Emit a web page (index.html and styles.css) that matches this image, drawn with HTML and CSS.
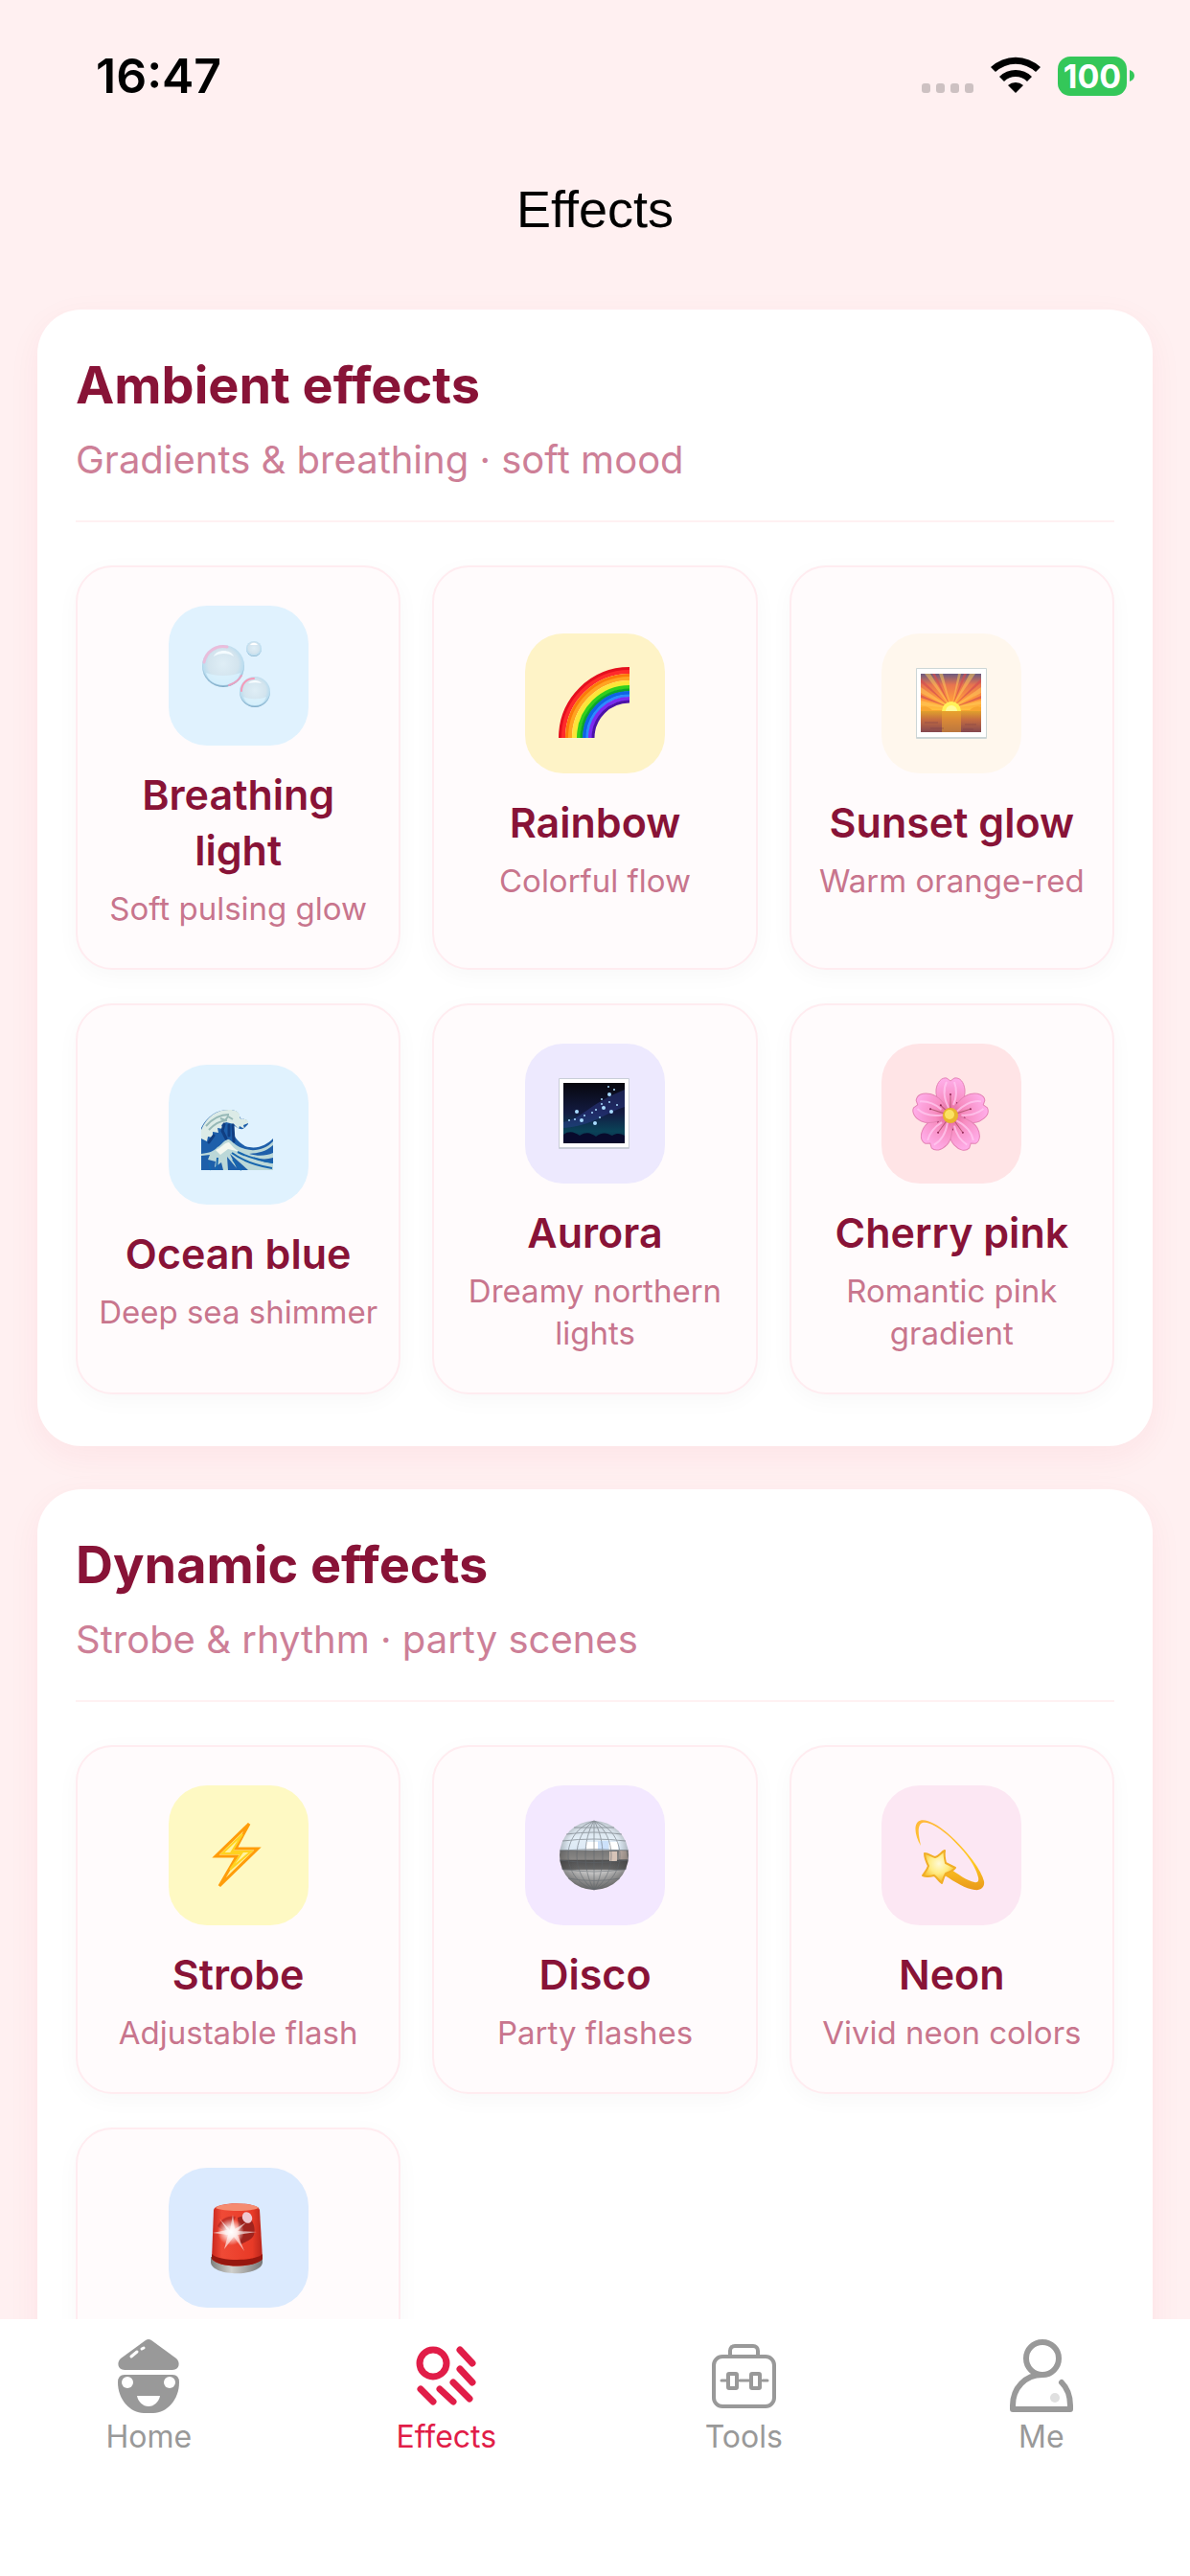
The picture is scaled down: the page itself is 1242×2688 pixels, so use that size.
FILE: index.html
```html
<!doctype html>
<html lang="en">
  <head>
    <meta charset="UTF-8" />
    <meta name="viewport" content="width=device-width, initial-scale=1.0" />
    <title>Effects</title>
    <link rel="stylesheet" href="styles.css">
  </head>

  <body>
    <div class="status-bar">
      <span class="time">16:47</span>
      <div class="status-icons">
        <svg class="signal" width="54" height="42" viewBox="0 0 54 42" fill="#cdc1c2">
          <rect x="0" y="29" width="9" height="10" rx="3" />
          <rect x="15" y="29" width="9" height="10" rx="3" />
          <rect x="30" y="29" width="9" height="10" rx="3" />
          <rect x="45" y="29" width="9" height="10" rx="3" />
        </svg>
        <svg class="wifi" width="52" height="42" viewBox="0 0 52 42">
          <path d="M0 12a38 38 0 0 1 52 0l-5 5a31 31 0 0 0-42 0z" />
          <path d="M9 22a24 24 0 0 1 34 0l-5 5a17 17 0 0 0-24 0z" />
          <path d="M18 31a12 12 0 0 1 16 0l-8 8z" />
        </svg>
        <div class="battery">
          <span class="battery-level">100</span>
          <svg width="5" height="12" viewBox="0 0 5 12"><path fill="#34c759" d="M0 0c3 1 5 3 5 6s-2 5-5 6z" /></svg>
        </div>
      </div>
    </div>

    <header class="page-header">
      <h1>Effects</h1>
    </header>

    <main class="content">
      <section class="panel">
        <div class="panel-head">
          <h2>Ambient effects</h2>
          <p>Gradients &amp; breathing · soft mood</p>
        </div>
        <div class="grid">
          <button class="card" type="button">
            <span class="icon sky">
              <svg viewBox="0 0 74 74">
                <defs>
                  <radialGradient id="bubble" cx="50%" cy="45%" r="55%">
                    <stop offset="0" stop-color="#dfeef6" />
                    <stop offset=".65" stop-color="#d3e4ee" />
                    <stop offset=".88" stop-color="#b9dcef" />
                    <stop offset="1" stop-color="#6f9fbe" />
                  </radialGradient>
                </defs>
                <circle cx="21" cy="27" r="22" fill="url(#bubble)" />
                <path d="M1 23A20 20 0 0 1 25 7" fill="none" stroke="#f3b4d6" stroke-width="3" stroke-linecap="round" opacity=".8" />
                <path d="M11 17c3-8 18-8 21 0-5-4-15-4-21 0z" fill="#f4fbff" />
                <path d="M3 34c10 4 26 4 36 0-2 8-9 13-18 13S5 42 3 34z" fill="#d9f2ff" opacity=".8" />
                <path d="M27 47c6-2 10-5 13-10" fill="none" stroke="#e8a3c2" stroke-width="2" stroke-linecap="round" />
                <circle cx="54" cy="54" r="16" fill="url(#bubble)" />
                <path d="M40 53c0-8 6-13 13-13" fill="none" stroke="#f59ab8" stroke-width="2" stroke-linecap="round" />
                <path d="M47 45c3-4 11-4 14 0-4-1-9-1-14 0z" fill="#f7fcff" />
                <path d="M42 59c7 3 17 3 24 0-2 6-6 9-12 9s-10-3-12-9z" fill="#daf2fe" opacity=".8" />
                <circle cx="53" cy="9" r="8" fill="url(#bubble)" />
                <path d="M49 5c2-3 6-3 8 0z" fill="#fff" />
              </svg>
            </span>
            <span class="name">Breathing light</span>
            <span class="desc">Soft pulsing glow</span>
          </button>
          <button class="card" type="button">
            <span class="icon amber">
              <svg viewBox="0 0 74 74" fill="none" stroke-width="4">
                <path d="M1 73A72 72 0 0 1 73 1" stroke="#e5101f" />
                <path d="M4 73A69 69 0 0 1 73 4" stroke="#ff2b2b" />
                <path d="M8 73A65 65 0 0 1 73 8" stroke="#fb7a09" />
                <path d="M11 73A62 62 0 0 1 73 11" stroke="#ffa321" />
                <path d="M15 73A58 58 0 0 1 73 15" stroke="#ffe23c" />
                <path d="M17 73A56 56 0 0 1 73 17" stroke="#f7e935" stroke-width="3" />
                <path d="M20 73A53 53 0 0 1 73 20" stroke="#31cf1c" />
                <path d="M23 73A50 50 0 0 1 73 23" stroke="#0ca628" stroke-width="3" />
                <path d="M26 73A47 47 0 0 1 73 26" stroke="#0f63e4" />
                <path d="M29 73A44 44 0 0 1 73 29" stroke="#2a8bff" stroke-width="3" />
                <path d="M32 73A41 41 0 0 1 73 32" stroke="#7b2bf0" />
                <path d="M35 73A38 38 0 0 1 73 35" stroke="#4b11a8" stroke-width="3" />
              </svg>
            </span>
            <span class="name">Rainbow</span>
            <span class="desc">Colorful flow</span>
          </button>
          <button class="card" type="button">
            <span class="icon orange">
              <svg viewBox="0 0 74 74">
                <defs>
                  <linearGradient id="dusk" x2="0" y2="1">
                    <stop offset="0" stop-color="#6b5a80" />
                    <stop offset=".3" stop-color="#e8744f" />
                    <stop offset=".7" stop-color="#ff9a3c" />
                    <stop offset="1" stop-color="#ffc53d" />
                  </linearGradient>
                  <linearGradient id="sea" x2="0" y2="1">
                    <stop offset="0" stop-color="#e0a02c" />
                    <stop offset=".4" stop-color="#c66d40" />
                    <stop offset="1" stop-color="#85484f" />
                  </linearGradient>
                </defs>
                <rect width="74" height="74" rx="1" fill="#cdd6d6" />
                <rect x="1" y="1" width="72" height="71" fill="#fff" />
                <rect x="5" y="6" width="63" height="39" fill="url(#dusk)" />
                <path d="M37 42 5 34v5zM37 42 5 20v6zM37 42 9 6h6zM37 42 24 6h4zM37 42 44 6h3zM37 42 56 6h6zM37 42 68 20v6zM37 42 68 34v4z" fill="#ffcf5a" opacity=".5" />
                <path d="M37 42 5 28v3zM37 42 5 11v4zM37 42 17 6h3zM37 42 50 6h3zM37 42 68 11v4zM37 42 68 29v3z" fill="#d64f50" opacity=".7" />
                <path d="M5 41c5-2 8 0 12 3h39c4-3 8-5 12-3v5H5z" fill="#f7a531" />
                <rect x="5" y="45" width="63" height="22" fill="url(#sea)" />
                <path d="M27 45h20v22H27z" fill="#f0a62e" opacity=".5" />
                <path d="M27 45a10 10 0 0 1 20 0z" fill="#fff159" />
                <path d="M31 45a6 6 0 0 1 12 0z" fill="#fffa9a" />
                <path d="M9 57h14m28 2h12m-48 4h14m20 1h11" stroke="#7c4148" opacity=".5" />
              </svg>
            </span>
            <span class="name">Sunset glow</span>
            <span class="desc">Warm orange-red</span>
          </button>
          <button class="card" type="button">
            <span class="icon sky">
              <svg viewBox="0 0 74 74">
                <path d="M-2 30c6-12 16-19 29-19 7 0 10 2 11 7l2 3c5-1 7 2 7 5l-5 5c-5 1-8-3-11-4-2 8 3 16 13 22 12 4 22-1 29-8v33H-2z" fill="#1e5faa" />
                <path d="M-2 32c6-14 16-21 29-21 8 0 12 3 11 8l2 2c5-1 8 2 7 4l-5 2 1 4-5-3-1 3-5-5-8-2-5 3 2 4-6-1 1 5-6-1v6l-5-1-1 5-6-3z" fill="#dcebe7" />
                <path d="M3 28c7-8 14-12 24-12M6 32c6-6 10-9 19-10M18 20l5 2 3-4 5 3" fill="none" stroke="#96b8b6" stroke-width="2" />
                <path d="M-2 57c9-1 13-3 17-7 4-2 8-9 12-8 5 3 8 8 17 10 10 3 22 0 29-8v4c-8 7-15 8-25 9 10 3 18 2 25-1v5c-7 2-13 2-21-1 9 6 15 6 21 7v7H47L28 57l7 15-10-12 1 14h-5l-2-8-7 5 1-6-8-2 2-5-9 1z" fill="#bcd8d8" />
                <path d="M13 53c5-1 9-8 14-8 3 3 6 8 12 10l-13-3-8 6z" fill="#f3f7ef" />
                <path d="M30 56c11 8 24 13 42 16M36 55c12 6 23 9 37 11M15 61l-1 13M6 66l2 8M31 63l9 11" stroke="#1766ae" stroke-width="2" fill="none" />
                <path d="M27 27v11m-5-12-2 7 4 8m-13-3-5 7m25-18 1 17" stroke="#103e82" stroke-width="3" fill="none" stroke-linecap="round" />
              </svg>
            </span>
            <span class="name">Ocean blue</span>
            <span class="desc">Deep sea shimmer</span>
          </button>
          <button class="card" type="button">
            <span class="icon violet">
              <svg viewBox="0 0 74 74">
                <defs>
                  <linearGradient id="night" x2="0" y2="1">
                    <stop offset="0" stop-color="#07070d" />
                    <stop offset=".5" stop-color="#131b42" />
                    <stop offset=".8" stop-color="#0a4358" />
                    <stop offset="1" stop-color="#0b2a48" />
                  </linearGradient>
                </defs>
                <rect x="-1" width="74" height="74" rx="1" fill="#c9ced8" />
                <rect y="1" width="72" height="71" fill="#fff" />
                <rect x="4" y="5" width="64" height="63" fill="url(#night)" />
                <path d="M4 46c20-4 28-20 64-34v18C49 36 34 50 4 52z" fill="#3444a0" opacity=".4" />
                <path d="M4 59c7-5 12-2 17 1 8-5 12-2 17 1 8-6 12-3 17-1 5-3 9-2 13 0v8H4z" fill="#080a2c" />
                <g fill="#a9dcff">
                  <circle cx="18" cy="35" r="2" /><circle cx="26" cy="39" r="1" /><circle cx="37" cy="47" r="2" />
                  <circle cx="42" cy="41" r="1" /><circle cx="46" cy="31" r="2" /><circle cx="52" cy="17" r="2" />
                  <circle cx="54" cy="35" r="2" /><circle cx="52" cy="25" r="1" /><circle cx="44" cy="22" r="1" />
                  <circle cx="57" cy="12" r="1" /><circle cx="23" cy="44" r="2" /><circle cx="10" cy="44" r="1" />
                  <circle cx="34" cy="36" r="1" /><circle cx="38" cy="33" r="1" /><circle cx="60" cy="28" r="1" />
                  <circle cx="51" cy="9" r="1" /><circle cx="16" cy="43" r="1" /><circle cx="44" cy="27" r="1" />
                </g>
              </svg>
            </span>
            <span class="name">Aurora</span>
            <span class="desc">Dreamy northern lights</span>
          </button>
          <button class="card" type="button">
            <span class="icon rose">
              <svg viewBox="0 0 74 74">
                <defs>
                  <radialGradient id="petal" gradientUnits="userSpaceOnUse" cx="36" cy="39" r="39">
                    <stop offset="0" stop-color="#e0568b" />
                    <stop offset=".4" stop-color="#f78cc0" />
                    <stop offset="1" stop-color="#ffaeea" />
                  </radialGradient>
                  <g id="leaf">
                    <path d="M36 39C27 31 20 22 21 12c1-8 6-13 11-12l4 3 4-3c6-1 10 4 11 12 1 10-6 19-15 27z" fill="url(#petal)" stroke="#e584b5" />
                    <path d="M32 4c-4 8-3 17 2 27m6-27c3 8 3 15-1 24" fill="none" stroke="#ffcdf2" stroke-width="2" opacity=".7" />
                    <path d="M36 36V18" stroke="#b75a76" />
                    <circle cx="36" cy="17" r="1" fill="#8d2350" />
                    <path d="m38 36 5-10" stroke="#b75a76" />
                    <circle cx="43" cy="26" r="1" fill="#8d2350" />
                  </g>
                </defs>
                <use href="#leaf" />
                <use href="#leaf" transform="rotate(72 36 39)" />
                <use href="#leaf" transform="rotate(144 36 39)" />
                <use href="#leaf" transform="rotate(216 36 39)" />
                <use href="#leaf" transform="rotate(288 36 39)" />
                <circle cx="36" cy="39" r="8" fill="#e9b62e" />
                <circle cx="35" cy="38" r="5" fill="#fbe263" />
              </svg>
            </span>
            <span class="name">Cherry pink</span>
            <span class="desc">Romantic pink gradient</span>
          </button>
        </div>
      </section>

      <section class="panel">
        <div class="panel-head">
          <h2>Dynamic effects</h2>
          <p>Strobe &amp; rhythm · party scenes</p>
        </div>
        <div class="grid">
          <button class="card" type="button">
            <span class="icon yellow">
              <svg viewBox="0 0 74 74">
                <path d="M48 4 13 38h22L17 69l40-39H34z" fill="#fff2a0" stroke="#ff9d0a" stroke-width="3" />
                <path d="M41 15 20 35h20L28 52l22-19H30z" fill="none" stroke="#ffd21f" stroke-width="2" />
              </svg>
            </span>
            <span class="name">Strobe</span>
            <span class="desc">Adjustable flash</span>
          </button>
          <button class="card" type="button">
            <span class="icon purple">
              <svg viewBox="0 0 74 74">
                <defs>
                  <linearGradient id="mirror" x2="0" y2="1">
                    <stop offset="0" stop-color="#c7d0d8" />
                    <stop offset=".25" stop-color="#e3eef7" />
                    <stop offset=".42" stop-color="#dce9f5" />
                    <stop offset=".43" stop-color="#777" />
                    <stop offset=".56" stop-color="#8a8886" />
                    <stop offset=".57" stop-color="#4f4f50" />
                    <stop offset=".7" stop-color="#666" />
                    <stop offset=".72" stop-color="#c9c9c9" />
                    <stop offset="1" stop-color="#999" />
                  </linearGradient>
                  <radialGradient id="shade" cx="50%" cy="40%" r="60%">
                    <stop offset=".6" stop-color="#333" stop-opacity="0" />
                    <stop offset="1" stop-color="#333" stop-opacity=".5" />
                  </radialGradient>
                </defs>
                <circle cx="36" cy="37" r="36" fill="url(#mirror)" />
                <path d="M28 23h12v8H28zM52 23h9v8h-9z" fill="#fff" />
                <path d="M40 22h11v9H40z" fill="#cce1fa" />
                <path d="M52 33h8v10h-8z" fill="#d7c4b8" />
                <path d="M62 32h8l1 9h-9z" fill="#b9aaa2" />
                <circle cx="36" cy="37" r="36" fill="url(#shade)" />
                <g fill="none" stroke="#5f666c" opacity=".55">
                  <path d="M15 8h42M7 15q29-4 58 0M3 22q33-4 66 0M0 32q36-3 72 0M0 42q36 5 72 0M2 51q34 6 68 0M9 61q27 5 54 0" />
                  <path d="M36 1v72M36 1c-12 20-12 52 0 72M36 1c12 20 12 52 0 72M36 1c-24 16-24 56 0 72M36 1c24 16 24 56 0 72M36 1c-36 12-36 60 0 72M36 1c36 12 36 60 0 72" />
                </g>
              </svg>
            </span>
            <span class="name">Disco</span>
            <span class="desc">Party flashes</span>
          </button>
          <button class="card" type="button">
            <span class="icon pink">
              <svg viewBox="0 0 74 74">
                <defs>
                  <linearGradient id="comet" x2="0" y2="1">
                    <stop offset="0" stop-color="#ffb93b" />
                    <stop offset=".6" stop-color="#ffca22" />
                    <stop offset="1" stop-color="#e9991b" />
                  </linearGradient>
                  <radialGradient id="star" cx="50%" cy="40%" r="60%">
                    <stop offset="0" stop-color="#fff9d6" />
                    <stop offset=".5" stop-color="#ffec85" />
                    <stop offset="1" stop-color="#f4b41c" />
                  </radialGradient>
                </defs>
                <path d="M5 27C0 18-3 7 2 2c6-5 19 2 30 11 20 17 36 39 39 51 1 6-3 10-10 9-9-1-20-8-31-15l4-8c9 6 20 14 27 15 3 1 5-1 4-5C62 46 47 28 32 15 21 6 10 0 5 4c-4 4-2 13 0 23z" fill="url(#comet)" />
                <path d="M30 32c-1 5 0 9 1 13l10 5c-2 3-6 4-10 6-2 3-3 7-4 10-3-2-5-6-8-8-4 1-8 2-12 0 2-3 5-6 6-10-2-4-4-8-4-13 4 0 7 3 11 4 4-1 6-5 10-7z" fill="url(#star)" stroke="#f1ae26" stroke-width="2" stroke-linejoin="round" />
              </svg>
            </span>
            <span class="name">Neon</span>
            <span class="desc">Vivid neon colors</span>
          </button>
          <button class="card card-top" type="button" aria-label="Siren">
            <span class="icon blue">
              <svg viewBox="0 0 74 74">
                <defs>
                  <linearGradient id="lamp">
                    <stop offset="0" stop-color="#c8271d" />
                    <stop offset=".2" stop-color="#f04a36" />
                    <stop offset=".8" stop-color="#e83a27" />
                    <stop offset="1" stop-color="#b9261b" />
                  </linearGradient>
                  <linearGradient id="base">
                    <stop offset="0" stop-color="#7f7f7c" />
                    <stop offset=".4" stop-color="#d0d0cd" />
                    <stop offset="1" stop-color="#777" />
                  </linearGradient>
                  <radialGradient id="flare">
                    <stop offset="0" stop-color="#fff" />
                    <stop offset=".4" stop-color="#fff" stop-opacity=".8" />
                    <stop offset="1" stop-color="#fff" stop-opacity="0" />
                  </radialGradient>
                </defs>
                <path d="M8 57v6c2 15 52 15 54 0v-6z" fill="url(#base)" />
                <path d="M11 8c1-9 46-9 48 0l3 51c-8 10-46 10-53 0z" fill="url(#lamp)" />
                <path d="M9 54c8 8 45 8 53 0v5c-7 10-46 10-53 0z" fill="#96170f" />
                <path d="M13 6c4-6 41-6 45 0-8 4-37 4-45 0z" fill="#f58b70" />
                <path d="M36 16c12-6 20 6 17 18-2 5-8 7-14 10z" fill="#8d1e1c" opacity=".8" />
                <path d="M15 25c4-9 13-12 19-10l-8 18z" fill="#a82320" opacity=".6" />
                <ellipse cx="46" cy="16" rx="5" ry="6" fill="#efc9d2" transform="rotate(-25 46 16)" />
                <path d="m28 29 3-16 2 15 12-7-9 9 20 1-20 3 7 17-11-15-10 13 4-15-16-2 15-3-8-12z" fill="#fff" opacity=".6" />
                <circle cx="29" cy="31" r="14" fill="url(#flare)" />
              </svg>
            </span>
          </button>
        </div>
      </section>
    </main>

    <nav class="tab-bar">
      <a class="tab" href="#home">
        <svg viewBox="0 0 78 78">
          <path fill="#999" d="M36 2q3-2 6 0l26 19c4 3 4 12-4 12H14c-8 0-8-9-4-12z" />
          <path fill="#999" d="M14 38h50q7 0 7 8c0 18-13 32-27 32H34C20 78 7 64 7 46q0-8 7-8z" />
          <path d="m21 19 6-5m5-3 2-1" fill="none" stroke="#fff" stroke-width="3" stroke-linecap="round" />
          <circle cx="17" cy="46" r="6" fill="#fff" />
          <circle cx="61" cy="46" r="6" fill="#fff" />
          <path fill="#fff" d="M27 60h24c-1 6-6 11-12 11s-11-5-12-11z" />
        </svg>
        <span>Home</span>
      </a>
      <a class="tab active" href="#effects" aria-current="page">
        <svg viewBox="0 0 78 78" fill="none" stroke="#e11d48" stroke-width="7" stroke-linecap="round">
          <circle cx="25" cy="26" r="14" />
          <path d="m53 12 13 14M53 32l13 14M46 46l17 17M12 53l13 13M32 53l14 13" />
        </svg>
        <span>Effects</span>
      </a>
      <a class="tab" href="#tools">
        <svg viewBox="0 0 78 78" fill="none" stroke="#999" stroke-width="4" stroke-linecap="round">
          <rect x="8" y="19" width="63" height="52" rx="9" />
          <path d="M25 18v-5c0-3 2-5 5-5h19c3 0 5 2 5 5v5" />
          <path d="M16 44h6m13 0h11m13 0h5" stroke-width="3" />
          <rect x="23" y="37" width="9" height="15" rx="1" />
          <rect x="47" y="37" width="9" height="15" rx="1" />
        </svg>
        <span>Tools</span>
      </a>
      <a class="tab" href="#me">
        <svg viewBox="0 0 78 78" fill="none" stroke="#999" stroke-width="6" stroke-linecap="round" stroke-linejoin="round">
          <circle cx="40" cy="21" r="17" />
          <path d="M40 38C22 38 9 52 9 70v4h60v-4c0-9-3-18-9-24" />
          <circle cx="53" cy="62" r="5" fill="#e0e0e0" stroke="none" />
        </svg>
        <span>Me</span>
      </a>
    </nav>
  </body>
</html>
```

FILE: styles.css
```css
* {
  box-sizing: border-box;
  margin: 0;
  padding: 0;
}

body {
  display: flex;
  flex-direction: column;
  height: 100vh;
  overflow: hidden;
  background: #fff0f1;
  color: #881337;
  font-family: Inter, "Liberation Sans", sans-serif;
}

.status-bar {
  display: flex;
  justify-content: space-between;
  align-items: center;
  flex: none;
  height: 158px;
  padding: 0 58px 0 100px;
  color: #000;
}

.time {
  font-size: 50px;
  font-weight: 600;
}

.status-icons {
  display: flex;
  align-items: center;
  gap: 18px;
}

.battery {
  display: flex;
  align-items: center;
  gap: 3px;
}

.battery-level {
  width: 72px;
  border-radius: 13px;
  background: #34c759;
  color: #fff;
  font-size: 34px;
  font-weight: 700;
  line-height: 41px;
  text-align: center;
}

.page-header {
  flex: none;
  padding: 26px 0 42px;
  color: #000;
  text-align: center;
}

.page-header h1 {
  font-family: "Liberation Sans", Arial, sans-serif;
  font-size: 54px;
  font-weight: 400;
  line-height: 68px;
}

.content {
  display: flex;
  flex: 1;
  flex-direction: column;
  gap: 45px;
  min-height: 0;
  overflow: hidden;
  padding: 29px 39px 0;
}

.panel {
  flex: none;
  padding: 44px 40px 54px;
  border-radius: 46px;
  background: #fff;
  box-shadow: 0 10px 34px rgba(225, 29, 72, 0.06);
}

.panel-head {
  padding-bottom: 34px;
  border-bottom: 2px solid #fff1f2;
  margin-bottom: 45px;
}

.panel-head h2 {
  font-size: 54px;
  font-weight: 700;
  line-height: 70px;
}

.panel-head p {
  margin-top: 14px;
  color: #cd7f97;
  font-size: 40px;
  line-height: 58px;
}

.grid {
  display: grid;
  grid-template-columns: repeat(3, minmax(0, 1fr));
  gap: 35px 33px;
}

.card {
  display: flex;
  flex-direction: column;
  align-items: center;
  justify-content: center;
  min-height: 364px;
  padding: 40px 20px;
  border: 2px solid #ffecf0;
  border-radius: 38px;
  background: #fffbfc;
  box-shadow: 0 6px 24px rgba(0, 0, 0, 0.03);
  color: inherit;
  font-family: inherit;
  text-align: center;
  cursor: pointer;
}

.card-top {
  justify-content: flex-start;
}

.icon {
  display: flex;
  align-items: center;
  justify-content: center;
  width: 146px;
  height: 146px;
  border-radius: 40px;
}

.icon svg {
  width: 74px;
  height: 74px;
  overflow: visible;
}

.sky {
  background: #e0f2fe;
}

.amber {
  background: #fef3c7;
}

.orange {
  background: #fff7ed;
}

.violet {
  background: #ede9fe;
}

.rose {
  background: #ffe4e6;
}

.yellow {
  background: #fef9c3;
}

.purple {
  background: #f3e8ff;
}

.pink {
  background: #fce7f3;
}

.blue {
  background: #dbeafe;
}

.name {
  margin-top: 22px;
  font-size: 43px;
  font-weight: 600;
  line-height: 58px;
}

.desc {
  margin-top: 10px;
  color: #c8758d;
  font-size: 33px;
  line-height: 44px;
}

.tab-bar {
  display: flex;
  flex: none;
  height: 268px;
  padding-top: 20px;
  background: #fff;
}

.tab {
  display: flex;
  flex: 1;
  flex-direction: column;
  align-items: center;
  gap: 5px;
  color: #999;
  font-size: 32px;
  line-height: 40px;
  text-decoration: none;
}

.tab svg {
  width: 78px;
  height: 78px;
}

.active {
  color: #e11d48;
}
```
